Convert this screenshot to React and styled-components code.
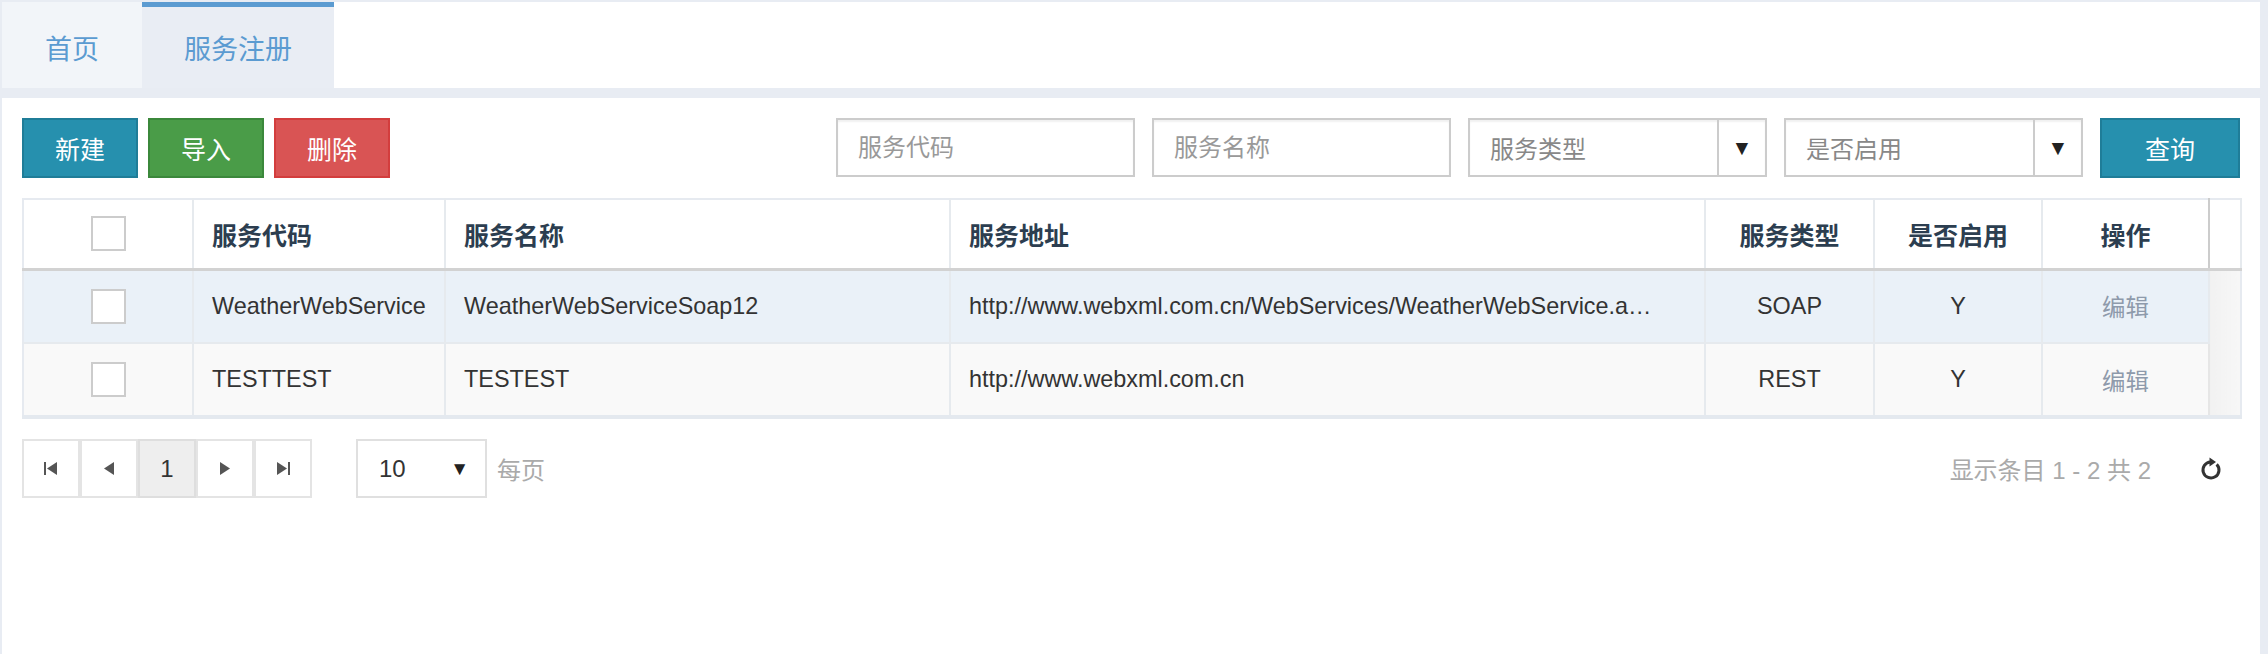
import React from "react";
import styled, { createGlobalStyle } from "styled-components";

const GlobalStyle = createGlobalStyle`
  html, body {
    margin: 0;
    padding: 0;
    height: 100%;
    background: #e8ecf3;
  }
  #root {
    min-height: 100%;
  }
  * {
    box-sizing: border-box;
  }
`;

const FONT = `"Liberation Sans", "Noto Sans CJK SC", Arial, sans-serif`;

const Page = styled.div`
  min-height: 100vh;
  display: flex;
  flex-direction: column;
  padding: 2px 8px 0 2px;
  font-family: ${FONT};
`;

const TabBar = styled.div`
  display: flex;
  height: 86px;
  background: #fff;
`;

const Tab = styled.div`
  width: ${(p) => p.width}px;
  display: flex;
  align-items: center;
  justify-content: center;
  font-size: 27px;
  color: #5b9bd1;
  background: ${(p) => (p.active ? "#e9edf4" : "#f2f5f9")};
  border-top: 5px solid ${(p) => (p.active ? "#5b9bd1" : "transparent")};
  cursor: pointer;
`;

const Panel = styled.div`
  flex: 1;
  margin-top: 10px;
  background: #fff;
  padding: 20px;
  display: flex;
  flex-direction: column;
  gap: 20px;
`;

const Toolbar = styled.div`
  display: flex;
  align-items: center;
  justify-content: space-between;
  height: 60px;
`;

const ButtonGroup = styled.div`
  display: flex;
  gap: 10px;
`;

const SearchGroup = styled.div`
  display: flex;
  gap: 17px;
`;

const tones = {
  info: { bg: "#2690ae", border: "#1f7d98" },
  success: { bg: "#4a9c48", border: "#3b883b" },
  danger: { bg: "#d95454", border: "#d33d3d" },
};

const Button = styled.button`
  width: ${(p) => p.width || 116}px;
  height: 60px;
  border: 2px solid ${(p) => tones[p.tone].border};
  background: ${(p) => tones[p.tone].bg};
  color: #fff;
  font-family: ${FONT};
  font-size: 25px;
  padding: 0;
  cursor: pointer;
`;

const Input = styled.input`
  width: 299px;
  height: 59px;
  border: 2px solid #ccc;
  box-shadow: inset 0 2px 2px rgba(0, 0, 0, 0.06);
  padding: 0 20px;
  font-family: ${FONT};
  font-size: 24px;
  color: #333;
  outline: none;
  &::placeholder {
    color: #999;
  }
`;

const SelectBox = styled.div`
  width: 299px;
  height: 59px;
  border: 2px solid #ccc;
  box-shadow: inset 0 2px 2px rgba(0, 0, 0, 0.06);
  display: flex;
  align-items: stretch;
`;

const SelectLabel = styled.div`
  flex: 1;
  display: flex;
  align-items: center;
  padding-left: 20px;
  font-size: 24px;
  color: #888;
`;

const SelectArrow = styled.div`
  width: 48px;
  border-left: 2px solid #ccc;
  display: flex;
  align-items: center;
  justify-content: center;
  font-size: 21px;
  color: #222;
`;

const Table = styled.table`
  width: 100%;
  table-layout: fixed;
  border-collapse: collapse;
  border: 2px solid #e6eaf0;
  border-bottom: 4px solid #e4e9ef;
`;

const Th = styled.th`
  height: 70px;
  padding: 0 18px;
  text-align: ${(p) => p.align || "left"};
  font-size: 25px;
  font-weight: bold;
  color: #2c3e50;
  background: #fff;
  border-right: 2px solid ${(p) => (p.dark ? "#ccc" : "#e6eaee")};
  border-bottom: 3px solid #d2d2d2;
`;

const Tr = styled.tr`
  background: ${(p) => p.bg};
`;

const Td = styled.td`
  height: 74px;
  padding: 0 ${(p) => p.padRight || 18}px 0 18px;
  text-align: ${(p) => p.align || "left"};
  font-size: 23.4px;
  color: ${(p) => p.color || "#333"};
  border-right: 2px solid #e6eaee;
  border-bottom: 2px solid #e6eaee;
  white-space: nowrap;
  overflow: hidden;
  text-overflow: ellipsis;
`;

const Gutter = styled.td`
  background: linear-gradient(to right, #f1f1f1, #f7f7f7);
  border-left: 2px solid #e6e6e6;
`;

const Checkbox = styled.span`
  display: inline-block;
  width: 35px;
  height: 35px;
  border: 2px solid #ccc;
  background: #fff;
  vertical-align: middle;
`;

const Footer = styled.div`
  display: flex;
  align-items: center;
  height: 59px;
`;

const Pager = styled.div`
  display: flex;
`;

const PageButton = styled.div`
  width: 58px;
  height: 59px;
  border: 2px solid ${(p) => (p.current ? "#dedede" : "#e4e4e4")};
  background: ${(p) => (p.current ? "#eee" : "#fff")};
  display: flex;
  align-items: center;
  justify-content: center;
  font-size: 24px;
  color: #333;
`;

const SizeSelect = styled.div`
  width: 131px;
  height: 59px;
  margin-left: 44px;
  border: 2px solid #e0e0e0;
  display: flex;
  align-items: center;
  justify-content: space-between;
  padding: 0 16px 0 21px;
  font-size: 24px;
  color: #333;
`;

const Caret = styled.span`
  font-size: 19px;
  color: #222;
`;

const Muted = styled.span`
  margin-left: ${(p) => p.gap || 0}px;
  font-size: 24px;
  color: #aaa;
`;

const Spacer = styled.div`
  flex: 1;
`;

const RefreshButton = styled.div`
  width: 24px;
  height: 24px;
  margin: 0 17px 0 48px;
  display: flex;
  align-items: center;
  justify-content: center;
`;

const Tri = ({ dir, bar }) => (
  <svg width="16" height="15" viewBox="0 0 16 15">
    {dir === "left" ? (
      <>
        <polygon points={bar ? "14,1 4,7.5 14,14" : "13,1 3,7.5 13,14"} fill="#555" />
        {bar && <rect x="1" y="1" width="2" height="13" fill="#555" />}
      </>
    ) : (
      <>
        <polygon points={bar ? "2,1 12,7.5 2,14" : "3,1 13,7.5 3,14"} fill="#555" />
        {bar && <rect x="13" y="1" width="2" height="13" fill="#555" />}
      </>
    )}
  </svg>
);

const RefreshIcon = () => (
  <svg width="24" height="24" viewBox="0 0 24 24">
    <path
      d="M17.66 7.34 A8 8 0 1 1 11.5 5"
      fill="none"
      stroke="#333"
      strokeWidth="3"
    />
    <polygon points="10.5,0.5 17,5 10.5,9.5" fill="#333" />
  </svg>
);

const columns = [
  { w: 170 },
  { w: 252, title: "服务代码" },
  { w: 505, title: "服务名称" },
  { w: 755, title: "服务地址" },
  { w: 169, title: "服务类型", align: "center" },
  { w: 168, title: "是否启用", align: "center" },
  { w: 167, title: "操作", align: "center" },
  { w: 32 },
];

const rows = [
  {
    code: "WeatherWebService",
    name: "WeatherWebServiceSoap12",
    url: "http://www.webxml.com.cn/WebServices/WeatherWebService.asmx",
    type: "SOAP",
    enabled: "Y",
    bg: "#eaf1f8",
  },
  {
    code: "TESTTEST",
    name: "TESTEST",
    url: "http://www.webxml.com.cn",
    type: "REST",
    enabled: "Y",
    bg: "#f9f9f9",
  },
];

export default function App() {
  return (
    <>
      <GlobalStyle />
      <Page>
        <TabBar>
          <Tab width={140}>首页</Tab>
          <Tab width={192} active>
            服务注册
          </Tab>
        </TabBar>
        <Panel>
          <Toolbar>
            <ButtonGroup>
              <Button tone="info">新建</Button>
              <Button tone="success">导入</Button>
              <Button tone="danger">删除</Button>
            </ButtonGroup>
            <SearchGroup>
              <Input placeholder="服务代码" />
              <Input placeholder="服务名称" />
              <SelectBox>
                <SelectLabel>服务类型</SelectLabel>
                <SelectArrow>▼</SelectArrow>
              </SelectBox>
              <SelectBox>
                <SelectLabel>是否启用</SelectLabel>
                <SelectArrow>▼</SelectArrow>
              </SelectBox>
              <Button tone="info" width={140}>
                查询
              </Button>
            </SearchGroup>
          </Toolbar>

          <Table>
            <colgroup>
              {columns.map((c, i) => (
                <col key={i} style={{ width: c.w }} />
              ))}
            </colgroup>
            <thead>
              <tr>
                <Th align="center">
                  <Checkbox />
                </Th>
                {columns.slice(1, 7).map((c, i) => (
                  <Th key={c.title} align={c.align} dark={i === 5}>
                    {c.title}
                  </Th>
                ))}
                <Th />
              </tr>
            </thead>
            <tbody>
              {rows.map((r, i) => (
                <Tr key={r.code} bg={r.bg}>
                  <Td align="center">
                    <Checkbox />
                  </Td>
                  <Td>{r.code}</Td>
                  <Td>{r.name}</Td>
                  <Td padRight={44}>{r.url}</Td>
                  <Td align="center">{r.type}</Td>
                  <Td align="center">{r.enabled}</Td>
                  <Td align="center" color="#8e9aab">
                    编辑
                  </Td>
                  {i === 0 && <Gutter rowSpan={rows.length} />}
                </Tr>
              ))}
            </tbody>
          </Table>

          <Footer>
            <Pager>
              <PageButton>
                <Tri dir="left" bar />
              </PageButton>
              <PageButton>
                <Tri dir="left" />
              </PageButton>
              <PageButton current>1</PageButton>
              <PageButton>
                <Tri dir="right" />
              </PageButton>
              <PageButton>
                <Tri dir="right" bar />
              </PageButton>
            </Pager>
            <SizeSelect>
              10
              <Caret>▼</Caret>
            </SizeSelect>
            <Muted gap={10}>每页</Muted>
            <Spacer />
            <Muted>显示条目 1 - 2 共 2</Muted>
            <RefreshButton>
              <RefreshIcon />
            </RefreshButton>
          </Footer>
        </Panel>
      </Page>
    </>
  );
}
